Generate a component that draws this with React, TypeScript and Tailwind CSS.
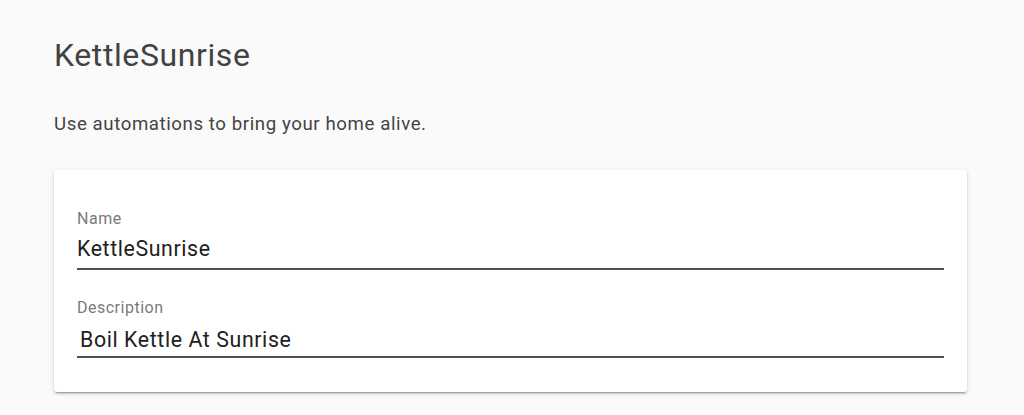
export default function App() {
  const font = { fontFamily: "Roboto, 'Noto Sans', sans-serif" };
  return (
    <div className="min-h-[415px] w-full bg-[#fafafa]" style={font}>
      <div className="px-[54px] pt-[35px]">
        <h1 className="text-[32px] leading-[40px] font-normal tracking-[0.6px] text-[#424242]">KettleSunrise</h1>
        <p className="mt-[37px] text-[18.67px] leading-[24px] tracking-[0.58px] text-[#444]">Use automations to bring your home alive.</p>
        <div className="mt-[34px] w-[913px] rounded-[3px] bg-white px-[23px] pt-[39px] pb-[34px] shadow-[0_2px_2px_0_rgba(0,0,0,0.14),0_1px_5px_0_rgba(0,0,0,0.12),0_3px_1px_-2px_rgba(0,0,0,0.2)]">
          <div>
            <div className="text-[16px] leading-[20px] tracking-[0.55px] text-[#7a7a7a]">Name</div>
            <div className="mt-[6px] border-b-2 border-[#4f4f4f] pb-[5px] text-[21.33px] leading-[28px] tracking-[0.6px] text-[#212121]">KettleSunrise</div>
          </div>
          <div className="mt-[28px]">
            <div className="text-[16px] leading-[20px] tracking-[0.5px] text-[#7a7a7a]">Description</div>
            <div className="mt-[8px] border-b-2 border-[#4f4f4f] pb-[2px] pl-[3px] text-[21.33px] leading-[28px] tracking-[0.6px] text-[#212121]">Boil Kettle At Sunrise</div>
          </div>
        </div>
      </div>
    </div>
  );
}
